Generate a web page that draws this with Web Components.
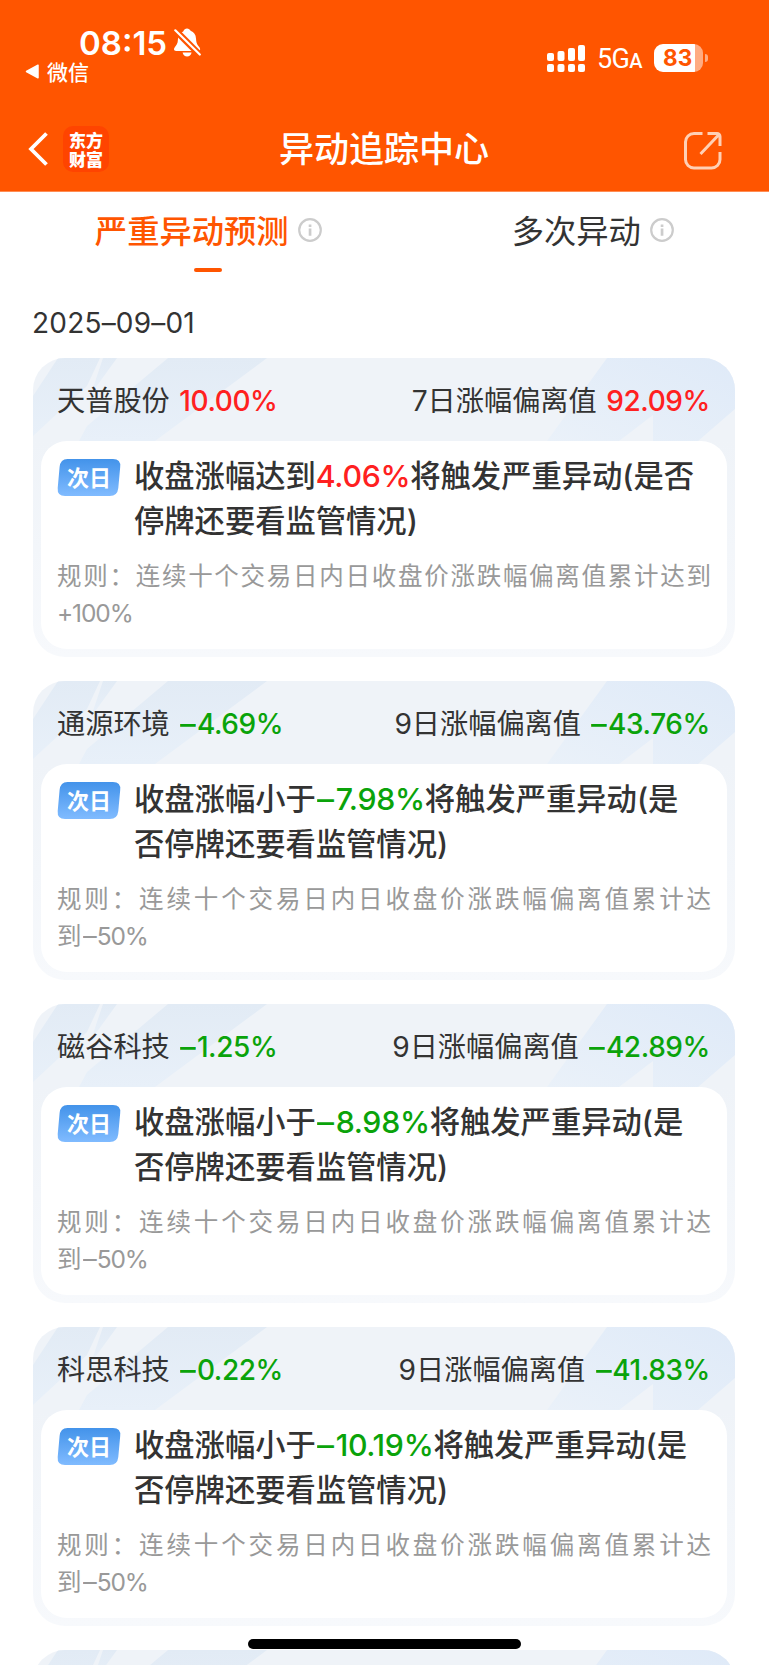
<!DOCTYPE html>
<html lang="zh-CN">
<head>
<meta charset="UTF-8">
<title>异动追踪中心</title>
<style>
    html, body {
        margin: 0;
        background: #fff;
    }

    body {
        height: 1665px;
        overflow: hidden;
        font-family: Inter, "Noto Sans CJK SC", sans-serif;
        color: #333;
    }
</style>
</head>
<body>
<alert-center></alert-center>

<script>
class StatusBar extends HTMLElement {
    constructor() {
        super();
        this.attachShadow({ mode: 'open' });
        this.shadowRoot.innerHTML = `
            <style>
                :host {
                    display: flex;
                    justify-content: space-between;
                    height: 106px;
                    color: #fff;
                }

                .left { padding: 24px 0 0 25px; }

                .clock {
                    display: flex;
                    align-items: center;
                    gap: 7px;
                    padding-left: 54px;
                    height: 37px;
                    font-size: 33px;
                    font-weight: 600;
                }

                .back {
                    display: flex;
                    align-items: center;
                    gap: 7px;
                    height: 22px;
                    margin-top: -1px;
                    font-size: 21px;
                    font-weight: 500;
                }

                .right {
                    display: flex;
                    align-items: center;
                    gap: 12px;
                    height: 29px;
                    padding: 43px 61px 0 0;
                }

                .net {
                    font-family: Roboto, sans-serif;
                    font-size: 27px;
                    letter-spacing: -0.6px;
                    padding-top: 3px;
                }

                .net small { font-size: 20px; font-weight: 500; }

                .battery {
                    display: flex;
                    align-items: center;
                    gap: 2px;
                }

                .level {
                    width: 49px;
                    height: 28px;
                    line-height: 28px;
                    border-radius: 9px;
                    background: linear-gradient(90deg, #fff 41px, #ffab82 41px);
                    color: #ff5500;
                    font-size: 22.500px;
                    font-weight: 700;
                    text-indent: 9px;
                }

                .tip {
                    width: 3px;
                    height: 8px;
                    border-radius: 0 3px 3px 0;
                    background: #ffab82;
                }
            </style>
            <div class="left">
                <div class="clock">
                    <span>08:15</span>
                    <svg width="27" height="29" viewBox="0 0 27 29">
                        <path fill="#fff" d="M9.2 3.6C10 1.4 11.3.4 13 .4s3 1 3.6 2.4c3.4 1.2 5.2 4 5.4 7.6.2 3.6.8 5.4 2 7l1.4 1.8c1.4 2 .8 3.8-1.6 3.8H2.2C-.2 23-.6 21 .8 19.200c1.800-2.200 3-3.600 3.100-7.400.1-4 2-6.800 5.300-8.200zM8.600 24.600h9c-.6 2.600-2.200 4-4.500 4s-3.900-1.400-4.500-4z"/>
                        <path stroke="#ff5500" stroke-width="6.500" d="M0 1l27 27"/>
                        <path stroke="#fff" stroke-width="2.200" stroke-linecap="round" d="M1.300 2.300l24.500 24.200"/>
                    </svg>
                </div>
                <div class="back">
                    <svg width="15" height="15" viewBox="0 0 15 15"><path fill="#fff" d="M13 1.200v12.600L1.500 7.500z" stroke="#fff" stroke-width="1.500" stroke-linejoin="round"/></svg>
                    <span>微信</span>
                </div>
            </div>
            <div class="right">
                <svg width="38" height="28" viewBox="0 0 38 28" fill="#fff">
                    <rect x="0" y="9" width="7" height="8" rx="2"/><rect x="0" y="20" width="7" height="8" rx="2"/>
                    <rect x="10.500" y="7" width="7" height="10" rx="2"/><rect x="10.500" y="20" width="7" height="8" rx="2"/>
                    <rect x="21" y="4" width="7" height="13" rx="2"/><rect x="21" y="20" width="7" height="8" rx="2"/>
                    <rect x="31" y="1" width="7" height="16" rx="2"/><rect x="31" y="20" width="7" height="8" rx="2"/>
                </svg>
                <span class="net">5G<small>A</small></span>
                <div class="battery">
                    <div class="level">83</div>
                    <div class="tip"></div>
                </div>
            </div>
        `;
    }
}

class NavBar extends HTMLElement {
    constructor() {
        super();
        this.attachShadow({ mode: 'open' });
        this.shadowRoot.innerHTML = `
            <style>
                :host {
                    display: grid;
                    grid-template-columns: 1fr auto 1fr;
                    align-items: center;
                    height: 85px;
                    color: #fff;
                }

                .start {
                    display: flex;
                    align-items: center;
                    gap: 15px;
                    padding-left: 28px;
                }

                .logo {
                    display: grid;
                    place-content: center;
                    width: 46px;
                    height: 46px;
                    border-radius: 10px;
                    background: #ff4400;
                    font-family: "Noto Sans CJK SC", sans-serif;
                    font-size: 17px;
                    font-weight: 900;
                    line-height: 19px;
                }

                .title {
                    font-family: "Noto Sans CJK SC", sans-serif;
                    font-size: 35px;
                    font-weight: 500;
                    line-height: 50px;
                    padding-bottom: 4px;
                    margin-left: -1px;
                }

                .end {
                    justify-self: end;
                    padding: 5px 46px 0 0;
                    height: 40px;
                }
            </style>
            <div class="start">
                <svg width="20" height="34" viewBox="0 0 20 34" fill="none" stroke="#fff" stroke-width="3.800"><path d="M18.500 1.500L3 17l15.500 15.500"/></svg>
                <div class="logo"><span>东方<br>财富</span></div>
            </div>
            <div class="title"><slot></slot></div>
            <div class="end">
                <svg width="40" height="40" viewBox="0 0 40 40" fill="none" stroke="#ffd0b5" stroke-width="3">
                    <path d="M19.500 2.500H11a8.500 8.500 0 0 0-8.500 8.500v17.500A8.500 8.500 0 0 0 11 37h17.500a8.500 8.500 0 0 0 8.500-8.500V21M24.500 2.500H34a3 3 0 0 1 3 3V15M36 3.500L17.500 23"/>
                </svg>
            </div>
        `;
    }
}

class TabItem extends HTMLElement {
    constructor() {
        super();
        this.attachShadow({ mode: 'open' });
        this.shadowRoot.innerHTML = `
            <style>
                :host {
                    display: flex;
                    flex-direction: column;
                    align-items: center;
                    flex: 1;
                }

                .row {
                    display: flex;
                    align-items: center;
                    gap: 9px;
                    height: 42px;
                    font-family: "Noto Sans CJK SC", sans-serif;
                    font-size: 32.300px;
                }

                .row span { padding-bottom: 2px; }

                svg { display: block; }

                .line {
                    width: 28px;
                    height: 4px;
                    margin-top: 17px;
                    border-radius: 2px;
                }

                :host([active]) .row { color: #ff5500; font-weight: 500; }
                :host([active]) .line { background: #ff5500; }
            </style>
            <div class="row">
                <span><slot></slot></span>
                <svg width="24" height="24" viewBox="0 0 24 24">
                    <circle cx="12" cy="12" r="10.800" fill="none" stroke="#ccc" stroke-width="2.200"/>
                    <path fill="#ccc" d="M10.700 6.500h2.700v2.600h-2.700zM10.700 10.600h2.700v7.200h-2.700z"/>
                </svg>
            </div>
            <div class="line"></div>
        `;
    }
}

class StockCard extends HTMLElement {
    connectedCallback() {
        this.attachShadow({ mode: 'open' });
        this.shadowRoot.innerHTML = `
            <style>
                :host {
                    display: grid;
                    flex: none;
                    grid-template-rows: 83px 208px;
                    height: 299px;
                    border-radius: 32px;
                    overflow: hidden;
                    background: linear-gradient(180deg, #eff3f8 83px, #f7f9fc 299px);
                }

                .bg { grid-area: 1 / 1; }

                .head {
                    grid-area: 1 / 1;
                    display: flex;
                    justify-content: space-between;
                    align-items: center;
                    padding: 0 25px 3px 24px;
                    font-size: 28.200px;
                }

                .num {
                    font-size: 28px;
                    font-weight: 500;
                    letter-spacing: -0.400px;
                    margin-left: 9.500px;
                }

                .dash {
                    display: inline-block;
                    transform: scaleX(1.12);
                    transform-origin: left;
                    margin: 0 3px 0 1px;
                }

                .up { color: #ff2020; }
                .down { color: #0aa30a; }

                .body {
                    margin: 0 8px;
                    padding: 13px 16px 0;
                    border-radius: 26px;
                    background: #fff;
                }

                .main { display: flex; gap: 13px; }

                .tag {
                    flex: none;
                    margin-top: 5px;
                    width: 64px;
                    height: 37px;
                }

                .msg {
                    white-space: nowrap;
                    font-size: 30.300px;
                    font-weight: 500;
                    line-height: 45px;
                }

                .msg .up, .msg .down { letter-spacing: -0.300px; }
                .msg .dash { margin-right: 4px; }

                .rule {
                    margin-top: 14px;
                    font-size: 24.500px;
                    line-height: 37px;
                    color: #999;
                }

                .rule .fill { text-align-last: justify; white-space: nowrap; }
                .rule .latin { letter-spacing: -1.100px; }
            </style>
            <svg class="bg" width="702" height="83" viewBox="0 0 702 83">
                <defs>
                    <linearGradient id="l" x2="0" y2="1"><stop stop-color="#e2ebf5"/><stop offset="1" stop-color="#e8f0f9"/></linearGradient>
                    <linearGradient id="r" x1="1" x2="0" y2="1"><stop stop-color="#dfeaf8"/><stop offset="1" stop-color="#eaf1f9"/></linearGradient>
                </defs>
                <path fill="url(#l)" d="M25 0H67L54 28L0 78V38z"/>
                <path fill="url(#l)" d="M70 0H84L58 36z"/>
                <path fill="url(#l)" d="M135 0H234L122 83H46L54 68z"/>
                <path fill="url(#r)" d="M574 0H702V51L665 83H620V57L586 83H514z"/>
            </svg>
        `;

        // la última tarjeta solo asoma su borde superior, sin contenido
        if (this.dataset.name) {
            this.renderContent();
        }
    }

    renderContent() {
        const { name, change, days, deviation, verb, limit, rule } = this.dataset;
        const up = !change.startsWith('–');
        const tone = up ? 'up' : 'down';
        const value = (text) => text.replace('–', '<span class="dash">–</span>');

        const content = document.createElement('template');
        content.innerHTML = `
            <div class="head">
                <div>${name}<span class="num ${tone}">${value(change)}</span></div>
                <div>${days}日涨幅偏离值<span class="num ${tone}">${value(deviation)}</span></div>
            </div>
            <div class="body">
                <div class="main">
                    <svg class="tag" viewBox="0 0 64 37">
                        <defs><linearGradient id="g" x2="0" y2="1"><stop stop-color="#4393ea"/><stop offset="1" stop-color="#80bbff"/></linearGradient></defs>
                        <path fill="url(#g)" d="M10.500 0H56q8 0 7.200 8L61.300 29q-.8 8-8.500 8H8Q0 37 .7 29L2.600 8Q3.400 0 10.500 0z"/>
                        <text x="10" y="27" fill="#fff" font-family="Noto Sans CJK SC, sans-serif" font-size="22" font-weight="700">次日</text>
                    </svg>
                    <div class="msg">收盘涨幅${verb}<span class="${tone}">${value(limit)}</span>将触发严重异动(是${up ? '否<br>' : '<br>否'}停牌还要看监管情况)</div>
                </div>
                <div class="rule">
                    <div class="fill">规则：连续十个交易日内日收盘价涨跌幅偏离值累计达${up ? '到' : ''}</div>
                    <div>${up ? '' : '到'}<span class="latin">${value(rule)}</span></div>
                </div>
            </div>
        `;
        this.shadowRoot.appendChild(content.content);
    }
}

class AlertCenter extends HTMLElement {
    constructor() {
        super();
        this.attachShadow({ mode: 'open' });
        this.shadowRoot.innerHTML = `
            <style>
                :host { display: block; height: 1665px; overflow: hidden; }
                header { background: #ff5500; height: 191px; border-bottom: 1px solid #ff8d54; }

                nav {
                    display: flex;
                    height: 97px;
                    padding: 17px 0 0 16px;
                    margin-right: -16px;
                    box-sizing: border-box;
                }

                .date {
                    height: 69px;
                    line-height: 68px;
                    padding-left: 32px;
                    font-size: 28px;
                    letter-spacing: 0.200px;
                }

                .list {
                    display: flex;
                    flex-direction: column;
                    gap: 24px;
                    height: 1307px;
                    overflow: hidden;
                    padding: 0 34px 0 33px;
                }

                .home {
                    position: fixed;
                    left: 248px;
                    top: 1639px;
                    width: 273px;
                    height: 10px;
                    border-radius: 5px;
                    background: #000;
                }
            </style>
            <header>
                <status-bar></status-bar>
                <nav-bar>异动追踪中心</nav-bar>
            </header>
            <nav>
                <tab-item active>严重异动预测</tab-item>
                <tab-item>多次异动</tab-item>
            </nav>
            <div class="date">2025–09–01</div>
            <div class="list">
                <stock-card data-name="天普股份" data-change="10.00%" data-days="7" data-deviation="92.09%" data-verb="达到" data-limit="4.06%" data-rule="+100%"></stock-card>
                <stock-card data-name="通源环境" data-change="–4.69%" data-days="9" data-deviation="–43.76%" data-verb="小于" data-limit="–7.98%" data-rule="–50%"></stock-card>
                <stock-card data-name="磁谷科技" data-change="–1.25%" data-days="9" data-deviation="–42.89%" data-verb="小于" data-limit="–8.98%" data-rule="–50%"></stock-card>
                <stock-card data-name="科思科技" data-change="–0.22%" data-days="9" data-deviation="–41.83%" data-verb="小于" data-limit="–10.19%" data-rule="–50%"></stock-card>
                <stock-card></stock-card>
            </div>
            <div class="home"></div>
        `;
    }
}

customElements.define('status-bar', StatusBar);
customElements.define('nav-bar', NavBar);
customElements.define('tab-item', TabItem);
customElements.define('stock-card', StockCard);
customElements.define('alert-center', AlertCenter);
</script>
</body>
</html>
